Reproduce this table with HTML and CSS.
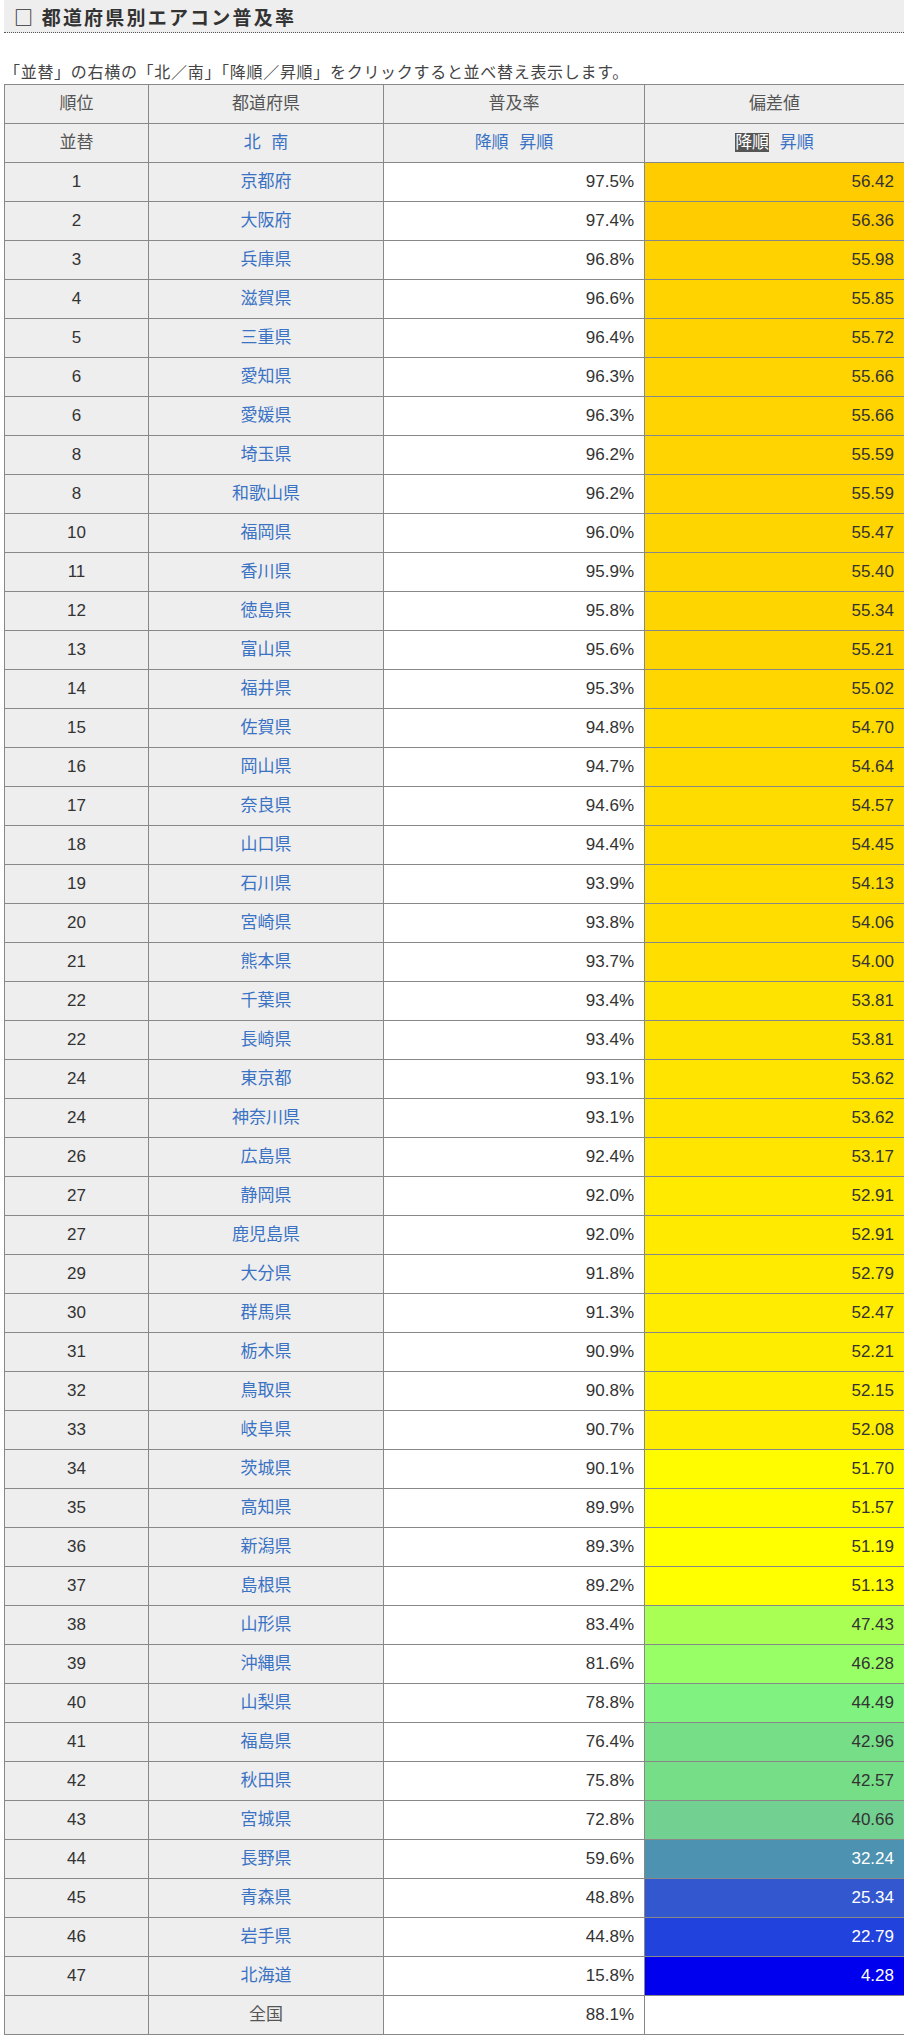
FILE: index.html
```html
<!DOCTYPE html>
<html lang="ja">
<head>
    <meta charset="UTF-8">
    <meta name="viewport" content="width=device-width, initial-scale=1.0">
    <title>都道府県別エアコン普及率</title>
    <link rel="stylesheet" href="styles.css">
</head>
<body>
    <div class="page">
        <h2 class="title">□ 都道府県別エアコン普及率</h2>
        <p class="note">「並替」の右横の「北／南」「降順／昇順」をクリックすると並べ替え表示します。</p>

        <table class="ranking">
            <colgroup>
                <col class="c-rank">
                <col class="c-pref">
                <col class="c-rate">
                <col class="c-dev">
            </colgroup>
            <thead>
                <tr>
                    <th>順位</th>
                    <th>都道府県</th>
                    <th>普及率</th>
                    <th>偏差値</th>
                </tr>
                <tr>
                    <th>並替</th>
                    <th><a class="sort">北</a> <a class="sort next">南</a></th>
                    <th><a class="sort">降順</a> <a class="sort next">昇順</a></th>
                    <th><a class="sort active">降順</a> <a class="sort next">昇順</a></th>
                </tr>
            </thead>
            <tbody id="rows"></tbody>
            <tfoot>
                <tr>
                    <td class="rank"></td>
                    <td class="pref total">全国</td>
                    <td class="num">88.1%</td>
                    <td class="num"></td>
                </tr>
            </tfoot>
        </table>
    </div>

    <script>
        // 順位, 都道府県, 普及率, 偏差値, 色
        const data = [
            [1, "京都府", "97.5", "56.42", "#ffcc00"],
            [2, "大阪府", "97.4", "56.36", "#ffcc00"],
            [3, "兵庫県", "96.8", "55.98", "#ffd200"],
            [4, "滋賀県", "96.6", "55.85", "#ffd300"],
            [5, "三重県", "96.4", "55.72", "#ffd300"],
            [6, "愛知県", "96.3", "55.66", "#ffd400"],
            [6, "愛媛県", "96.3", "55.66", "#ffd400"],
            [8, "埼玉県", "96.2", "55.59", "#ffd400"],
            [8, "和歌山県", "96.2", "55.59", "#ffd400"],
            [10, "福岡県", "96.0", "55.47", "#ffd500"],
            [11, "香川県", "95.9", "55.40", "#ffd500"],
            [12, "徳島県", "95.8", "55.34", "#ffd500"],
            [13, "富山県", "95.6", "55.21", "#ffd500"],
            [14, "福井県", "95.3", "55.02", "#ffd600"],
            [15, "佐賀県", "94.8", "54.70", "#ffdb00"],
            [16, "岡山県", "94.7", "54.64", "#ffdb00"],
            [17, "奈良県", "94.6", "54.57", "#ffdc00"],
            [18, "山口県", "94.4", "54.45", "#ffdc00"],
            [19, "石川県", "93.9", "54.13", "#ffdd00"],
            [20, "宮崎県", "93.8", "54.06", "#ffdd00"],
            [21, "熊本県", "93.7", "54.00", "#ffde00"],
            [22, "千葉県", "93.4", "53.81", "#ffe300"],
            [22, "長崎県", "93.4", "53.81", "#ffe300"],
            [24, "東京都", "93.1", "53.62", "#ffe400"],
            [24, "神奈川県", "93.1", "53.62", "#ffe400"],
            [26, "広島県", "92.4", "53.17", "#ffe500"],
            [27, "静岡県", "92.0", "52.91", "#ffea00"],
            [27, "鹿児島県", "92.0", "52.91", "#ffea00"],
            [29, "大分県", "91.8", "52.79", "#ffeb00"],
            [30, "群馬県", "91.3", "52.47", "#ffec00"],
            [31, "栃木県", "90.9", "52.21", "#ffed00"],
            [32, "鳥取県", "90.8", "52.15", "#ffee00"],
            [33, "岐阜県", "90.7", "52.08", "#ffee00"],
            [34, "茨城県", "90.1", "51.70", "#fffc00"],
            [35, "高知県", "89.9", "51.57", "#fffc00"],
            [36, "新潟県", "89.3", "51.19", "#ffff00"],
            [37, "島根県", "89.2", "51.13", "#ffff00"],
            [38, "山形県", "83.4", "47.43", "#aaff55"],
            [39, "沖縄県", "81.6", "46.28", "#99ff66"],
            [40, "山梨県", "78.8", "44.49", "#80f27f"],
            [41, "福島県", "76.4", "42.96", "#77de88"],
            [42, "秋田県", "75.8", "42.57", "#77de88"],
            [43, "宮城県", "72.8", "40.66", "#72d090"],
            [44, "長野県", "59.6", "32.24", "#4d92b0"],
            [45, "青森県", "48.8", "25.34", "#3357cf"],
            [46, "岩手県", "44.8", "22.79", "#2242dd"],
            [47, "北海道", "15.8", "4.28", "#0000ee"]
        ];

        const tbody = document.getElementById("rows");

        data.forEach(row => {
            const tr = document.createElement("tr");
            const dark = parseFloat(row[3]) < 35;
            tr.innerHTML =
                '<td class="rank">' + row[0] + '</td>' +
                '<td class="pref"><a>' + row[1] + '</a></td>' +
                '<td class="num">' + row[2] + '%</td>' +
                '<td class="num dev' + (dark ? ' dark' : '') + '" style="background:' + row[4] + '">' + row[3] + '</td>';
            tbody.appendChild(tr);
        });
    </script>
</body>
</html>
```

FILE: styles.css
```css
html, body {
    margin: 0;
    padding: 0;
    background: #fff;
}

body {
    font-family: "Liberation Sans", "Noto Sans CJK JP", sans-serif;
    color: #444;
}

.page {
    margin-left: 4px;
    width: 900px;
}

.title {
    margin: 0;
    height: 32px;
    line-height: 34px;
    padding-left: 10px;
    background: #eee;
    border-bottom: 1px dotted #555;
    font-family: "Noto Sans CJK JP", sans-serif;
    font-size: 19px;
    font-weight: bold;
    letter-spacing: 2.2px;
    color: #333;
}

.note {
    margin: 28px 0 3px;
    line-height: 20px;
    font-size: 16px;
    color: #444;
    font-family: "Noto Sans CJK JP", sans-serif;
    letter-spacing: 0.7px;
}

.ranking {
    width: 900px;
    border-collapse: collapse;
    table-layout: fixed;
    font-size: 17px;
}

.c-rank { width: 144px; }
.c-pref { width: 235px; }
.c-rate { width: 261px; }
.c-dev { width: 260px; }

.ranking th,
.ranking td {
    border: 1px solid #888;
    padding: 8px 10px;
    line-height: 22px;
    height: 22px;
}

.ranking th {
    background: #eee;
    font-weight: normal;
    color: #555;
    text-align: center;
}

.sort {
    color: #3a72c4;
    cursor: pointer;
}

.sort.next {
    margin-left: 6px;
}

.sort.active {
    background: #555;
    color: #fff;
}

.rank {
    background: #eee;
    text-align: center;
    color: #333;
}

.pref {
    background: #eee;
    text-align: center;
}

.pref a {
    color: #3a72c4;
    cursor: pointer;
}

.pref.total {
    color: #555;
}

.num {
    text-align: right;
    color: #333;
    background: #fff;
}

.dev {
    padding-right: 9px;
}

.dev.dark {
    color: #fff;
}
```
